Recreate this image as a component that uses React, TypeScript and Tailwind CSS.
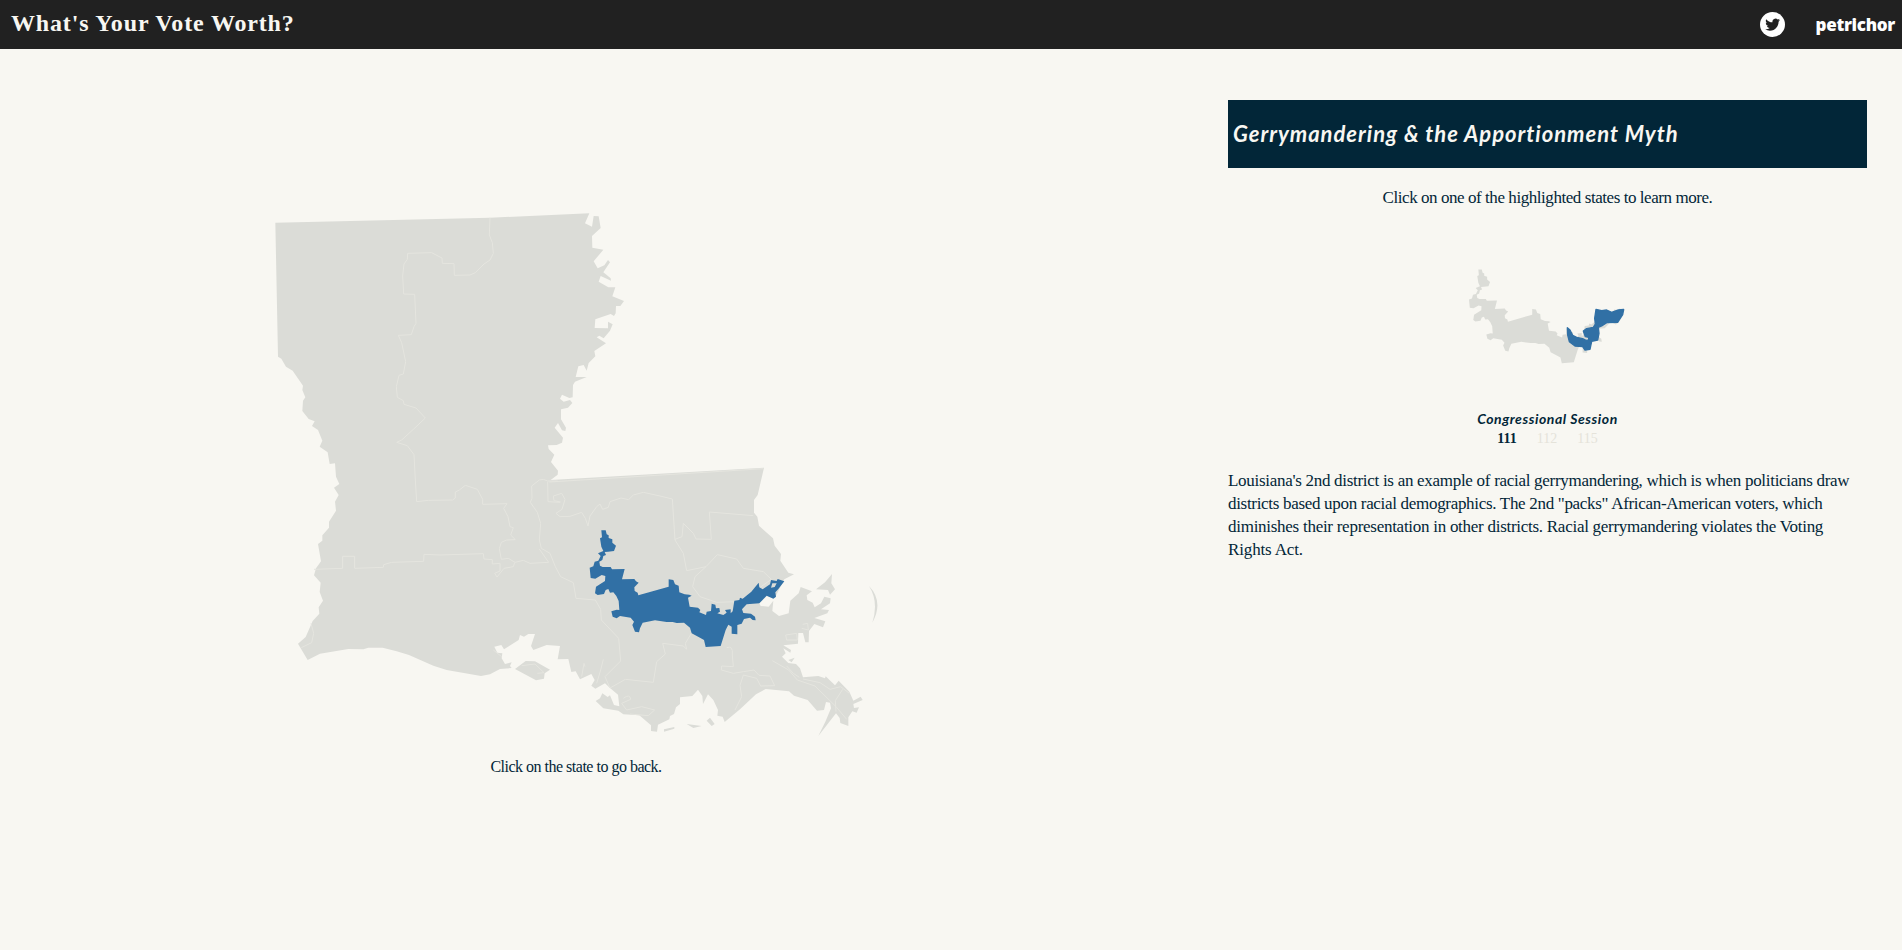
const STATE =
  "M46,68 690,53 988,40 975,70 996,80 1001,48 1016,49 1022,84 996,108 997,143 1030,149 1001,184 1013,205 1033,196 1044,180 1050,187 1030,217 1052,235 1053,242 1022,228 1016,245 1045,262 1066,262 1057,289 1092,303 1081,318 1068,318 1067,340 1062,348 1052,342 1006,358 1004,384 1044,385 1044,365 1058,373 1050,392 1031,415 1018,407 1010,412 1038,430 1003,453 1006,469 986,489 980,512 971,495 955,499 947,531 980,531 945,545 939,555 938,592 928,594 906,584 900,596 911,605 930,600 937,609 924,623 903,628 903,658 918,683 916,693 906,691 894,669 884,683 909,713 906,728 890,735 864,736 866,747 883,764 873,786 894,812 893,824 872,840 1512,803 1493,885 1482,900 1482,938 1492,950 1497,977 1539,1015 1544,1037 1563,1062 1561,1082 1585,1118 1602,1123 1573,1138 1570,1143 1545,1193 1520,1188 1498,1210 1502,1218 1526,1220 1540,1202 1537,1233 1557,1248 1586,1240 1591,1202 1616,1180 1622,1161 1656,1174 1640,1186 1642,1200 1658,1208 1664,1222 1683,1210 1693,1190 1712,1195 1710,1210 1683,1228 1707,1230 1702,1240 1663,1254 1696,1264 1689,1282 1663,1272 1647,1293 1646,1327 1636,1327 1629,1299 1615,1299 1614,1331 1570,1336 1593,1350 1591,1358 1570,1345 1577,1360 1566,1370 1585,1389 1608,1392 1620,1405 1629,1432 1675,1428 1695,1435 1697,1429 1725,1456 1736,1442 1768,1475 1780,1502 1802,1490 1808,1500 1780,1512 1782,1524 1797,1522 1790,1538 1777,1534 1765,1552 1765,1578 1741,1569 1739,1554 1728,1540 1675,1608 1696,1565 1713,1525 1710,1508 1698,1506 1692,1530 1671,1532 1643,1500 1602,1487 1587,1474 1517,1467 1488,1483 1440,1528 1394,1566 1388,1550 1372,1547 1374,1530 1360,1500 1344,1483 1329,1512 1327,1488 1314,1469 1297,1488 1260,1492 1260,1512 1248,1522 1242,1542 1230,1548 1228,1558 1194,1574 1191,1595 1173,1593 1173,1576 1138,1546 1090,1543 1075,1532 1030,1525 1007,1503 1020,1495 1027,1480 1043,1491 1050,1486 1062,1515 1078,1519 1074,1484 1050,1464 1035,1450 1006,1466 994,1457 1004,1440 994,1422 960,1438 947,1414 934,1416 925,1377 893,1378 900,1338 860,1335 820,1350 813,1338 825,1302 805,1302 792,1310 780,1305 776,1320 732,1348 724,1335 703,1340 712,1358 727,1360 725,1375 735,1392 755,1387 750,1398 755,1404 720,1407 690,1423 663,1428 560,1410 520,1397 447,1365 410,1354 368,1343 325,1343 310,1348 265,1347 180,1361 143,1380 114,1331 137,1311 158,1263 178,1241 176,1222 189,1202 179,1176 182,1148 162,1126 168,1105 183,1084 174,1032 187,1022 187,1006 207,983 207,965 228,932 225,905 236,885 222,863 238,852 228,830 225,790 209,792 203,757 179,740 187,722 174,690 156,678 164,664 146,657 127,633 129,602 136,592 127,570 129,557 98,512 78,500 64,476 54,470Z";

const ISLANDS =
  "M765,1407 797,1383 825,1384 870,1409 854,1420 852,1436 828,1441ZM1668,1168 1695,1147 1716,1122 1714,1150 1725,1168 1710,1184 1704,1170ZM1827,1158Q1872,1205 1837,1268Q1857,1205 1827,1158ZM1585,1380 1604,1373 1595,1387ZM1212,1588 1243,1581 1243,1586 1212,1595ZM1280,1572 1325,1578 1300,1584ZM1340,1562 1350,1553 1364,1572 1355,1578Z";

const BORDERS = [
  "M690,53 688,105 697,128 700,160 690,180 672,192 646,218 630,225 583,226 582,191 547,190 546,174 534,168 515,158 443,160 442,178 432,192 428,228 431,282 464,283 468,370 462,380 454,404 415,406 425,428 437,485 430,522 417,526 409,560 412,592 430,602 432,613 468,624 496,654 460,688 438,708 425,720 410,727 442,737 462,764 466,840 470,905 505,901 578,900 586,894 586,876 598,870 616,856 652,868 668,898 668,913 741,911 731,925 744,950 750,980 760,983 752,1005 766,1019 740,1020 724,1027 718,1046 724,1078 745,1075 765,1087 790,1081 810,1090 866,1087 838,1047",
  "M162,1108 248,1105 248,1069 284,1069 284,1105 370,1102 371,1094 395,1087 491,1084 492,1063 540,1065 670,1061 672,1077 697,1079 697,1092 720,1090 720,1113 704,1120 711,1131 732,1105 760,1100 764,1088",
  "M893,843 863,843 850,838 838,840 815,858 816,895 811,907 832,937 842,970 838,1020 844,1045 870,1060 886,1100 902,1130 940,1148 948,1195 1006,1200 1022,1228 1024,1260 1076,1315 1082,1383 1035,1430 1050,1464",
  "M868,846 1510,806",
  "M863,845 864,905 900,907 M902,906 882,902 880,888 905,880 915,898 906,928 888,940 900,950 930,949 965,937 976,955 984,978 990,948 1010,920 1020,912 1028,928 1045,922 1050,905 1083,894 1106,899 1120,885 1150,877 1200,888 1237,897 1245,1020 1270,1060 1280,1112 1338,1100",
  "M1245,1018 1266,1010 1270,970 1300,1000 1308,1017 1354,1018 1348,936 1480,947",
  "M1338,1100 1372,1064 1430,1077 1450,1105 1510,1115 1534,1138 1475,1180 1430,1205 1370,1207 1320,1190 1298,1160 1305,1130 1338,1100",
  "M1050,1464 1096,1438 1180,1447 1190,1385 1216,1362 1208,1330 1270,1338 1280,1348 1276,1330 1294,1300",
  "M1400,1343Q1420,1335 1417,1365L1420,1400 1385,1398 1384,1410 1420,1420 1450,1415 1482,1410 1497,1426 1530,1428 1544,1457 1502,1458 1490,1435 1450,1425 1440,1456 1445,1490 1425,1530",
  "M1537,1382 1586,1410 1612,1440 1665,1458 1728,1520 1760,1558 M1629,1437 1680,1448 1710,1468 1742,1460 1768,1480 M1728,1535 1726,1502 1748,1468 M1580,1398 1600,1420 1618,1432",
  "M1090,1495Q1110,1480 1112,1498L1085,1510 1100,1530 1145,1520 1184,1530 1165,1547 1110,1542 M1628,1273 1643,1270 1645,1290 1625,1285 M1577,1305 1610,1300 1612,1320 1580,1320Z",
  "M153,1270 161,1300 155,1328 124,1343 M785,1397 825,1392 852,1418 832,1420 M700,1350 725,1370 M965,1430 972,1390 975,1400 M1010,1450 1022,1410 1030,1378",
];

const DISTRICT =
  "M184,241 197,241 200,253 206,256 206,264 217,268 217,278 228,287 222,303 204,305 194,306 198,315 190,318 187,330 178,335 180,347 188,351 212,351 216,358 254,357 246,388 283,387 288,394 296,398 283,412 284,423 293,428 295,436 386,410 386,388 400,390 405,403 416,407 418,427 434,433 448,434 455,437 444,443 449,470 474,473 481,480 478,487 498,495 500,485 513,483 515,461 526,464 528,475 538,474 540,485 532,490 550,495 560,488 555,480 572,478 572,490 578,484 583,452 598,450 600,443 608,446 634,425 656,398 658,412 668,418 690,403 693,390 710,393 713,387 733,394 715,417 706,427 708,440 700,446 680,437 658,460 620,463 606,478 610,489 633,491 645,500 647,511 638,510 630,503 612,507 605,521 592,525 592,553 575,551 575,530 565,524 557,540 542,588 497,591 492,570 480,563 455,550 450,533 432,518 410,519 398,516 380,516 345,511 308,518 300,535 297,547 285,545 277,525 282,515 272,503 240,498 230,505 218,500 214,484 230,479 238,480 236,453 229,438 220,427 210,428 205,417 197,420 192,432 173,435 165,430 168,410 195,393 196,378 185,375 166,386 152,384 149,353 160,349 164,335 175,332 182,318 174,310 190,303 184,290 180,265 186,262ZM697,400 693,413 704,411 710,400Z";

const OVERLAP =
  "M382,233 390,240 398,256 410,262 428,266 438,271 446,270 446,262 436,260 430,243 440,236 460,232 466,222 464,205 468,178 485,182 500,180 515,187 535,180 551,178 548,194 533,217 500,218 485,228 475,232 477,250 473,270 455,274 450,298 435,300 428,290 405,288 388,275 383,255Z";

function StateMap() {
  return (
    <svg className="ml-2 h-[550px] w-[640px] cursor-pointer" viewBox="0 0 1920 1650">
      <path d={STATE} fill="#dbdcd7" />
      <path d={ISLANDS} fill="#dbdcd7" />
      <g fill="none" stroke="#e5e5df" strokeWidth="3" strokeLinejoin="round">
        {BORDERS.map((d) => (
          <path key={d} d={d} />
        ))}
      </g>
      <path d={DISTRICT} fill="#3170a5" fillRule="evenodd" transform="translate(840 750)" />
    </svg>
  );
}

function DistrictComparison() {
  return (
    <svg className="h-[115px] w-[214px]" viewBox="0 0 642 345">
      <path d={DISTRICT} fill="#dbdcd7" fillRule="evenodd" transform="translate(-32.2 -134.5) scale(.8 .802)" />
      <path d={OVERLAP} fill="#3170a5" stroke="#3170a5" strokeWidth="4" strokeLinejoin="round" />
    </svg>
  );
}

export default function App() {
  return (
    <div className="flex h-[950px] flex-col overflow-hidden bg-[#f8f7f2] font-['Liberation_Serif',serif] text-[17px] text-[#022638]">
      <header className="flex h-[49px] shrink-0 items-center justify-between bg-[#212121] pr-[7px] pl-[11px] text-[#f8f7f2]">
        <h1 className="pb-1 text-[24px] font-bold tracking-[0.84px] whitespace-nowrap">What's Your Vote Worth?</h1>
        <div className="flex items-center">
          <svg className="mr-[31px] size-[25px]" viewBox="0 0 25 25">
            <circle cx="12.5" cy="12.5" r="12.5" fill="#fff" />
            <path
              transform="translate(5.2 5.2) scale(.62)"
              fill="#212121"
              d="M23.95 4.57a10 10 0 0 1-2.82.77 4.96 4.96 0 0 0 2.16-2.72c-.95.55-2 .95-3.13 1.18a4.92 4.92 0 0 0-8.38 4.48C7.69 8.1 4.07 6.13 1.64 3.16a4.82 4.82 0 0 0-.67 2.48c0 1.71.87 3.21 2.19 4.1a4.9 4.9 0 0 1-2.23-.62v.06a4.92 4.92 0 0 0 3.95 4.83 5 5 0 0 1-2.21.08 4.94 4.94 0 0 0 4.6 3.42A9.87 9.87 0 0 1 0 19.54a14 14 0 0 0 7.55 2.21c9.05 0 14-7.5 14-13.98 0-.21 0-.42-.02-.63a9.94 9.94 0 0 0 2.46-2.55z"
            />
          </svg>
          <span className="font-['Open_Sans',sans-serif] text-[17px] font-extrabold tracking-[-0.3px] text-white">petrichor</span>
        </div>
      </header>
      <main className="flex">
        <section className="flex w-[1152px] flex-col items-center pt-[151px]">
          <StateMap />
          <p className="mt-1 text-[16px] leading-[26px] tracking-[-0.5px] whitespace-nowrap">Click on the state to go back.</p>
        </section>
        <section className="ml-[76px] w-[639px] pt-[51px]">
          <h2 className="flex h-[68px] items-center bg-[#022638] pb-0.5 pl-[5px] font-['Lato',sans-serif] text-[22px] font-bold tracking-[0.98px] text-[#f8f7f2] italic">
            Gerrymandering &amp; the Apportionment Myth
          </h2>
          <p className="mt-[18px] text-center leading-[23px] tracking-[-0.44px]">Click on one of the highlighted states to learn more.</p>
          <div className="mt-[41px] ml-[212px] h-[159px]">
            <DistrictComparison />
          </div>
          <h3 className="text-center font-['Lato',sans-serif] text-[14px] leading-[19px] font-bold tracking-[0.55px] italic">Congressional Session</h3>
          <div className="flex justify-center gap-5 pt-0.5 text-[14px] leading-[18px]">
            <button className="font-bold">111</button>
            <button className="text-[#e5e3da]">112</button>
            <button className="text-[#e5e3da]">115</button>
          </div>
          <p className="mt-[21px] leading-[23px] whitespace-nowrap">
            <span className="block tracking-[-0.29px]">
              Louisiana's 2nd district is an example of racial gerrymandering, which is when politicians draw
            </span>
            <span className="block tracking-[-0.31px]">
              districts based upon racial demographics. The 2nd "packs" African-American voters, which
            </span>
            <span className="block tracking-[-0.27px]">
              diminishes their representation in other districts. Racial gerrymandering violates the Voting
            </span>
            <span className="block tracking-[-0.14px]">Rights Act.</span>
          </p>
        </section>
      </main>
    </div>
  );
}
